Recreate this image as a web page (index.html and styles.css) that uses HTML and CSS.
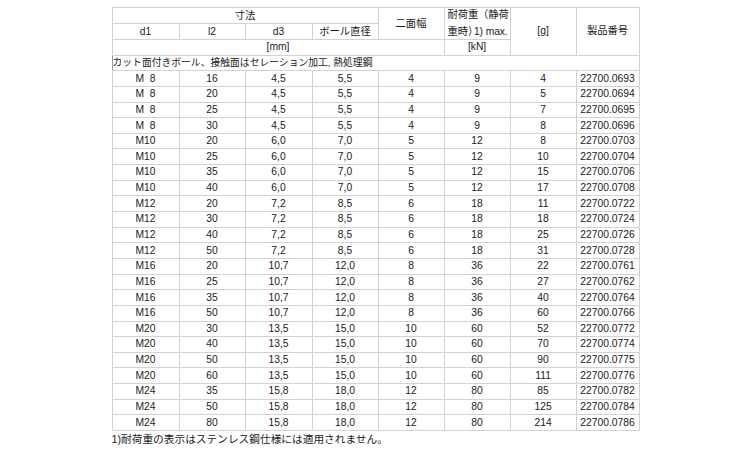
FILE: index.html
```html
<!DOCTYPE html>
<html lang="ja">
<head>
<meta charset="utf-8">
<title>仕様表</title>
<link rel="stylesheet" href="styles.css">
</head>
<body>
<div class="sheet">
<table class="spec">
<colgroup>
<col class="c1"><col class="c2"><col class="c3"><col class="c4"><col class="c5"><col class="c6"><col class="c7"><col class="c8">
</colgroup>
<thead>
<tr>
<th colspan="4">寸法</th>
<th rowspan="2">二面幅</th>
<th rowspan="2" class="load"><div class="load-text">耐荷重（静荷<br>重時<span class="paren">）</span>1) max.</div></th>
<th rowspan="3">[g]</th>
<th rowspan="3">製品番号</th>
</tr>
<tr>
<th>d1</th><th>l2</th><th>d3</th><th>ボール直径</th>
</tr>
<tr>
<th colspan="5">[mm]</th>
<th>[kN]</th>
</tr>
</thead>
<tbody>
<tr class="group"><td colspan="8">カット面付きボール、接触面はセレーション加工, 熱処理鋼</td></tr>
<tr><td>M&nbsp;&nbsp;8</td><td>16</td><td>4,5</td><td>5,5</td><td>4</td><td>9</td><td>4</td><td>22700.0693</td></tr>
<tr><td>M&nbsp;&nbsp;8</td><td>20</td><td>4,5</td><td>5,5</td><td>4</td><td>9</td><td>5</td><td>22700.0694</td></tr>
<tr><td>M&nbsp;&nbsp;8</td><td>25</td><td>4,5</td><td>5,5</td><td>4</td><td>9</td><td>7</td><td>22700.0695</td></tr>
<tr><td>M&nbsp;&nbsp;8</td><td>30</td><td>4,5</td><td>5,5</td><td>4</td><td>9</td><td>8</td><td>22700.0696</td></tr>
<tr><td>M10</td><td>20</td><td>6,0</td><td>7,0</td><td>5</td><td>12</td><td>8</td><td>22700.0703</td></tr>
<tr><td>M10</td><td>25</td><td>6,0</td><td>7,0</td><td>5</td><td>12</td><td>10</td><td>22700.0704</td></tr>
<tr><td>M10</td><td>35</td><td>6,0</td><td>7,0</td><td>5</td><td>12</td><td>15</td><td>22700.0706</td></tr>
<tr><td>M10</td><td>40</td><td>6,0</td><td>7,0</td><td>5</td><td>12</td><td>17</td><td>22700.0708</td></tr>
<tr><td>M12</td><td>20</td><td>7,2</td><td>8,5</td><td>6</td><td>18</td><td>11</td><td>22700.0722</td></tr>
<tr><td>M12</td><td>30</td><td>7,2</td><td>8,5</td><td>6</td><td>18</td><td>18</td><td>22700.0724</td></tr>
<tr><td>M12</td><td>40</td><td>7,2</td><td>8,5</td><td>6</td><td>18</td><td>25</td><td>22700.0726</td></tr>
<tr><td>M12</td><td>50</td><td>7,2</td><td>8,5</td><td>6</td><td>18</td><td>31</td><td>22700.0728</td></tr>
<tr><td>M16</td><td>20</td><td>10,7</td><td>12,0</td><td>8</td><td>36</td><td>22</td><td>22700.0761</td></tr>
<tr><td>M16</td><td>25</td><td>10,7</td><td>12,0</td><td>8</td><td>36</td><td>27</td><td>22700.0762</td></tr>
<tr><td>M16</td><td>35</td><td>10,7</td><td>12,0</td><td>8</td><td>36</td><td>40</td><td>22700.0764</td></tr>
<tr><td>M16</td><td>50</td><td>10,7</td><td>12,0</td><td>8</td><td>36</td><td>60</td><td>22700.0766</td></tr>
<tr><td>M20</td><td>30</td><td>13,5</td><td>15,0</td><td>10</td><td>60</td><td>52</td><td>22700.0772</td></tr>
<tr><td>M20</td><td>40</td><td>13,5</td><td>15,0</td><td>10</td><td>60</td><td>70</td><td>22700.0774</td></tr>
<tr><td>M20</td><td>50</td><td>13,5</td><td>15,0</td><td>10</td><td>60</td><td>90</td><td>22700.0775</td></tr>
<tr><td>M20</td><td>60</td><td>13,5</td><td>15,0</td><td>10</td><td>60</td><td>111</td><td>22700.0776</td></tr>
<tr><td>M24</td><td>35</td><td>15,8</td><td>18,0</td><td>12</td><td>80</td><td>85</td><td>22700.0782</td></tr>
<tr><td>M24</td><td>50</td><td>15,8</td><td>18,0</td><td>12</td><td>80</td><td>125</td><td>22700.0784</td></tr>
<tr><td>M24</td><td>80</td><td>15,8</td><td>18,0</td><td>12</td><td>80</td><td>214</td><td>22700.0786</td></tr>
</tbody>
</table>
<p class="note">1)耐荷重の表示はステンレス鋼仕様には適用されません。</p>
</div>
</body>
</html>
```

FILE: styles.css
```css
html, body {
  margin: 0;
  padding: 0;
  background: #ffffff;
}

body {
  padding-top: 7px;
  font-family: "Liberation Sans", "Noto Sans CJK JP", sans-serif;
  color: #1a1a1a;
}

.sheet {
  width: 527px;
  margin: 0 auto;
}

.spec {
  width: 527px;
  table-layout: fixed;
  border-collapse: collapse;
  border-top: 1px solid #8a8a8a;
  border-left: 1px solid #9a9a9a;
  border-right: 1px solid #777777;
  border-bottom: 1px solid #808080;
  font-size: 10.3px;
}

.c1 { width: 67px; }
.c2 { width: 66px; }
.c3 { width: 67px; }
.c4 { width: 66px; }
.c5 { width: 66px; }
.c6 { width: 66px; }
.c7 { width: 66px; }
.c8 { width: 63px; }

.spec tr {
  height: 15.65px;
}

.spec th,
.spec td {
  padding: 0;
  line-height: 12px;
  text-align: center;
  vertical-align: middle;
  font-weight: normal;
  border: 1px solid #d2d2d2;
  white-space: nowrap;
  overflow: visible;
}

.spec th {
  font-size: 10.3px;
}

.spec .load {
  text-align: left;
  padding-left: 3px;
}

.load-text {
  line-height: 17px;
  margin: -2px 0 -1px;
  letter-spacing: -0.1px;
}

.paren {
  font-feature-settings: "halt";
  padding-right: 1px;
}

.spec .group td {
  text-align: left;
  padding-left: 0;
  font-size: 9.8px;
  border-left-color: #9a9a9a;
}

.note {
  margin: 1px 0 0;
  font-size: 10.7px;
  line-height: 14px;
}
```
